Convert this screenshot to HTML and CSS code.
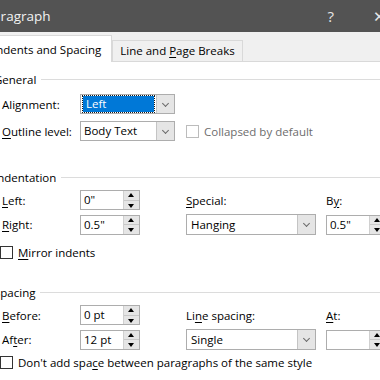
FILE: index.html
```html
<!DOCTYPE html>
<html lang="en">
<head>
  <meta charset="UTF-8">
  <title>Paragraph</title>
  <link rel="stylesheet" href="styles.css">
</head>
<body>
  <div class="dialog">
    <div class="titlebar">
      <span class="title">Paragraph</span>
      <span class="help">?</span>
      <span class="close">&#x2715;</span>
    </div>
    <div class="tabs">
      <div class="tab active"><u>I</u>ndents and Spacing</div>
      <div class="tab">Line and <u>P</u>age Breaks</div>
    </div>
    <div class="content">
      <div class="group-head"><span>General</span></div>
      <div class="rows general">
        <label>Ali<u>g</u>nment:</label>
        <div class="select focus"><span class="val"><span class="sel">Left</span></span><span class="drop"></span></div>
        <span></span>
        <label><u>O</u>utline level:</label>
        <div class="select"><span class="val">Body Text</span><span class="drop"></span></div>
        <div class="check disabled"><span class="box"></span>Collapsed by default</div>
      </div>

      <div class="group-head indent-head"><span>Indentation</span></div>
      <div class="rows grid4">
        <label><u>L</u>eft:</label>
        <div class="spin"><span class="val">0"</span><span class="arrows"><i class="up"></i><i class="dn"></i></span></div>
        <label><u>S</u>pecial:</label>
        <label>B<u>y</u>:</label>
        <label><u>R</u>ight:</label>
        <div class="spin"><span class="val">0.5"</span><span class="arrows"><i class="up"></i><i class="dn"></i></span></div>
        <div class="select wide"><span class="val">Hanging</span><span class="drop"></span></div>
        <div class="spin"><span class="val">0.5"</span><span class="arrows"><i class="up"></i><i class="dn"></i></span></div>
      </div>
      <div class="check mirror"><span class="box"></span><span><u>M</u>irror indents</span></div>

      <div class="group-head spacing-head"><span>Spacing</span></div>
      <div class="rows grid4">
        <label><u>B</u>efore:</label>
        <div class="spin"><span class="val">0 pt</span><span class="arrows"><i class="up"></i><i class="dn"></i></span></div>
        <label>Li<u>n</u>e spacing:</label>
        <label><u>A</u>t:</label>
        <label>Af<u>t</u>er:</label>
        <div class="spin"><span class="val">12 pt</span><span class="arrows"><i class="up"></i><i class="dn"></i></span></div>
        <div class="select wide"><span class="val">Single</span><span class="drop"></span></div>
        <div class="spin"><span class="val"></span><span class="arrows"><i class="up"></i><i class="dn"></i></span></div>
      </div>
      <div class="check last"><span class="box"></span><span>Don't add spa<u>c</u>e between paragraphs of the same style</span></div>
    </div>
  </div>
</body>
</html>
```

FILE: styles.css
```css
body { margin: 0; background: #fff; font-family: "Open Sans", "Noto Sans", sans-serif; font-size: 11.5px; color: #000; overflow: hidden; }
u { text-decoration: underline; text-underline-offset: 2px; }
.dialog { width: 410px; margin-left: -14px; }

/* title bar */
.titlebar { height: 32px; background: #535353; color: #f2f2f2; display: flex; align-items: center; }
.title { font-size: 13.5px; margin-left: -1px; flex: 1; }
.help { font-size: 15px; margin-right: 39px; color: #e6e6e6; }
.close { font-size: 15px; margin-right: 10px; color: #e6e6e6; }

/* tabs */
.tabs { height: 30px; background: #f0f0f0; border-bottom: 1px solid #d9d9d9; display: flex; align-items: flex-end; box-sizing: border-box; }
.tab { border: 1px solid #d9d9d9; border-bottom: none; padding: 0 7px; height: 21px; line-height: 20px; box-sizing: border-box; }
.tab.active { background: #fff; height: 27px; line-height: 28px; padding: 0 10px 0 7px; margin-bottom: -1px; border-left: none; }

/* groups */
.content { padding: 8px 0 0 8px; }
.group-head { display: flex; align-items: center; height: 18px; }
.group-head::after { content: ""; flex: 1; border-top: 1px solid #dcdcdc; margin-left: 5px; }
.rows { padding-left: 8px; }
.general { display: grid; grid-template-columns: 78px 106px 1fr; row-gap: 7px; align-items: center; margin-top: 6px; }
.grid4 { display: grid; grid-template-columns: 78px 106px 140px 60px; row-gap: 4px; align-items: center; margin-top: 4px; }
.indent-head { margin-top: 27px; }
.spacing-head { margin-top: 23px; }

/* select */
.select { display: flex; width: 95px; height: 20px; border: 1px solid #adadad; box-sizing: border-box; background: #fff; }
.select.wide { width: 130px; height: 21px; }
.select .val { flex: 1; padding-left: 3px; line-height: 18px; }
.select.wide .val { padding-left: 4px; line-height: 19px; }
.select.focus .val { padding: 1px 2px; display: flex; }
.select .sel { background: #0078d7; color: #fff; flex: 1; outline: 1px dotted #1a1a1a; padding-left: 3px; line-height: 16px; }
.drop { width: 17px; background: #e5e5e5; border-left: 1px solid #c4c4c4; position: relative; }
.drop::after { content: ""; position: absolute; left: 6px; top: 6px; width: 4px; height: 4px; border-right: 1px solid #6a6a6a; border-bottom: 1px solid #6a6a6a; transform: rotate(45deg); }

/* spin box */
.spin { display: flex; width: 60px; height: 20px; border: 1px solid #adadad; box-sizing: border-box; background: #fff; }
.spin .val { flex: 1; padding-left: 3px; line-height: 18px; }
.arrows { width: 15px; display: flex; flex-direction: column; border-left: 1px solid #d0d0d0; }
.arrows i { flex: 1; background: #e5e5e5; position: relative; }
.arrows i.up { border-bottom: 1px solid #c8c8c8; }
.arrows i::after { content: ""; position: absolute; left: 4px; width: 0; height: 0; border-left: 3px solid transparent; border-right: 3px solid transparent; }
.arrows i.up::after { top: 2px; border-bottom: 4px solid #000; }
.arrows i.dn::after { top: 3px; border-top: 4px solid #000; }

/* check boxes */
.check { display: flex; align-items: center; }
.check .box { width: 13px; height: 13px; border: 1px solid #333; box-sizing: border-box; margin-right: 5px; background: #fff; }
.check.disabled { color: #6d6d6d; }
.check.disabled .box { border-color: #bcbcbc; }
.mirror { margin: 10px 0 0 6px; }
.last { margin: 5px 0 0 6px; }
```
